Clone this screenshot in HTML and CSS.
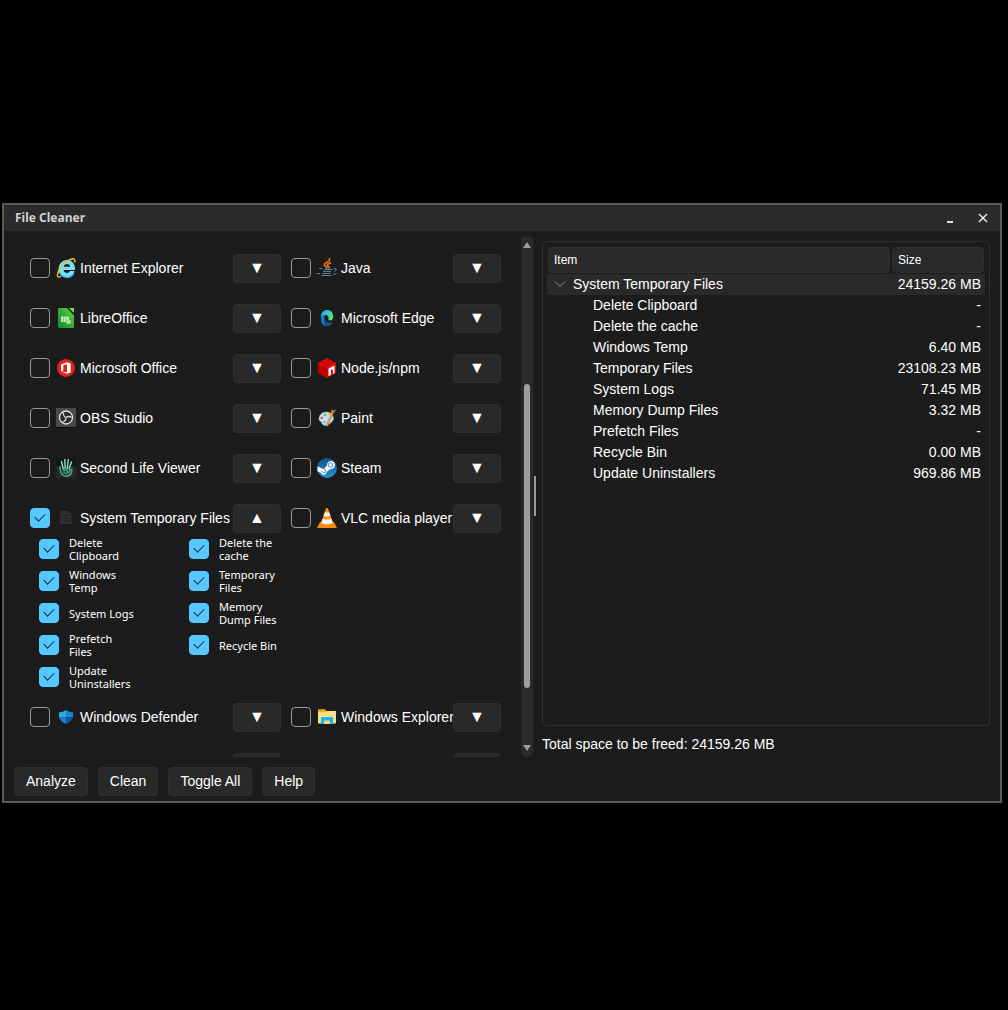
FILE: index.html
```html
<!DOCTYPE html>
<html lang="en">
<head>
<meta charset="utf-8">
<title>File Cleaner</title>
<link rel="stylesheet" href="styles.css">
</head>
<body>
<main class="window">
  <header class="titlebar">
    <h1 class="title">File Cleaner</h1>
    <button class="win-btn" type="button" aria-label="Minimize">
      <svg width="12" height="12" viewBox="0 0 12 12"><path d="M3 10h6" stroke="#e4e4e4" stroke-width="2"/></svg>
    </button>
    <button class="win-btn" type="button" aria-label="Close">
      <svg width="12" height="12" viewBox="0 0 12 12"><path d="M2 2l8 8M10 2l-8 8" stroke="#f0f0f0" stroke-width="1.4" fill="none"/></svg>
    </button>
  </header>

  <div class="content">
    <section class="list-pane">
      <div class="programs">
        <div class="program"><div class="head">
          <input class="check" type="checkbox" id="ie">
          <label class="name" for="ie">
            <svg class="icon" viewBox="0 0 20 20"><path d="M18.500 13H14C13.400 14.300 12.400 14.900 11 14.900C8.900 14.900 7.700 13.500 7.600 11.900H19C19.500 6.300 16 2 11 2C6.300 2 2.600 6 2.600 11C2.600 16 6.300 19.600 11 19.600C14.700 19.600 17.600 17 18.500 13M7.700 8.800C8 7 9.300 6.100 11 6.100C12.800 6.100 14 7.200 14.200 8.800Z" fill="#78dffb" fill-rule="evenodd"/><path d="M4 15c1.500 3 4 4.300 7 4.300c3 0 5.500-1.500 6.800-4.200" fill="none" stroke="#3bb4ea" stroke-width="1.300"/><path d="M18.800 4.500C19 2 18.500.5 16.500.8C11 2 3.300 9 1.700 15.500C1 18.700 2 19.800 5 18.300" fill="none" stroke="#f2bd2c" stroke-width="1.400"/></svg>
            Internet Explorer</label>
          <button class="toggle" type="button" aria-label="Expand Internet Explorer">▼</button>
        </div></div>
        <div class="program"><div class="head">
          <input class="check" type="checkbox" id="java">
          <label class="name" for="java">
            <svg class="icon" viewBox="0 0 20 20"><path d="M12.500 0v2.500l-5 3.500v1.500l3 3M14 4.500l-3.500 2v1.500l1.500 1v1.500" fill="none" stroke="#ee7b16" stroke-width="1.500"/><path d="M2 10.500h3M7 11.500h9M6 13.500h8M5.500 15.500h8M0 15.500h3M4.500 17.500h10M17 10.500h2v2l-2 1M16 16.500l3.500-1" fill="none" stroke="#5285a5" stroke-width="1"/></svg>
            Java</label>
          <button class="toggle" type="button" aria-label="Expand Java">▼</button>
        </div></div>

        <div class="program"><div class="head">
          <input class="check" type="checkbox" id="libre">
          <label class="name" for="libre">
            <svg class="icon" viewBox="0 0 20 20"><defs><linearGradient id="gl" x1="1" y1="0" x2="0" y2="1"><stop offset="0" stop-color="#5fd33c"/><stop offset="1" stop-color="#15853c"/></linearGradient></defs><path d="M3 0h8l7 7.500V18.500q0 1.500-1.500 1.500H3.500Q2 20 2 18.500V1.500Q2 0 3 0z" fill="url(#gl)"/><path d="M13 0h5v5z" fill="#72e24a"/><path d="M5 8.500h8v5.500H5z" fill="#bdebb0"/><path d="M7.500 8.500v5.500M10 8.500v5.500" stroke="#63bd68" stroke-width=".7"/><path d="M10 12h5v4h-5z" fill="#83d56e"/><circle cx="12.500" cy="13.500" r="1.800" fill="#aeea80"/></svg>
            LibreOffice</label>
          <button class="toggle" type="button" aria-label="Expand LibreOffice">▼</button>
        </div></div>
        <div class="program"><div class="head">
          <input class="check" type="checkbox" id="edge">
          <label class="name" for="edge">
            <svg class="icon" viewBox="0 0 20 20"><defs><linearGradient id="ge" x1="0" y1="0" x2="1" y2=".5"><stop offset="0" stop-color="#2aaee8"/><stop offset=".55" stop-color="#31c6d5"/><stop offset="1" stop-color="#62dc65"/></linearGradient></defs><path d="M4 9C4 4.500 6.500 2 10.300 2C14 2 16.200 4.800 16.200 8.500C16.200 11 15 12.500 13 12.500C11.500 12.500 11 11.800 11.500 10.500C11.900 8.500 10.500 7 8.700 7C6.500 7 4.800 8 4 10z" fill="url(#ge)"/><path d="M4 10C4.500 7.700 6.500 6.300 8.500 6.700C7 8.500 6.500 10.500 7.500 13C8.500 15.500 11.500 16 15.200 14.500C14 17 12 18 10 18C6 18 3.800 14.500 4 10z" fill="#147bd0"/><path d="M8.300 9.500C7.200 12.500 9.500 15.800 15.200 14.500C14 17 12 18 10 18C7 17.500 5.500 12 8.300 9.500z" fill="#155399"/></svg>
            Microsoft Edge</label>
          <button class="toggle" type="button" aria-label="Expand Microsoft Edge">▼</button>
        </div></div>

        <div class="program"><div class="head">
          <input class="check" type="checkbox" id="office">
          <label class="name" for="office">
            <svg class="icon" viewBox="0 0 20 20"><circle cx="10" cy="10" r="9" fill="#e2231a"/><path d="M5 6.500L11 4.300L14.700 5.400V14.600L11 15.800L5 13.600L11 14.200V6.300L7.300 7.200V12.500L5 13.600z" fill="#fff"/></svg>
            Microsoft Office</label>
          <button class="toggle" type="button" aria-label="Expand Microsoft Office">▼</button>
        </div></div>
        <div class="program"><div class="head">
          <input class="check" type="checkbox" id="npm">
          <label class="name" for="npm">
            <svg class="icon" viewBox="0 0 20 20"><path d="M10 0l9 5v10l-9 5l-9-5V5z" fill="#d20808"/><path d="M1 5l9 5v10l-9-5z" fill="#c00000"/><path d="M1 5l9 5l9-5" fill="none" stroke="#ea2727" stroke-width=".5"/><path d="M11.500 10.500l6-3v7.500l-1.700 1v-5l-2 1v5l-2.300 1z" fill="#fff"/></svg>
            Node.js/npm</label>
          <button class="toggle" type="button" aria-label="Expand Node.js/npm">▼</button>
        </div></div>

        <div class="program"><div class="head">
          <input class="check" type="checkbox" id="obs">
          <label class="name" for="obs">
            <svg class="icon" viewBox="0 0 20 20"><path d="M0 0h20v20H0z" fill="#0c0c0c"/><path d="M0 0h20v19H0z" fill="#494949"/><circle cx="10" cy="9.500" r="6.500" fill="#2c2a2c" stroke="#e4e4e4" stroke-width="1.300"/><path d="M7.500 4.500c-.5 2.500.5 4 2.500 5c2-1.500 3.500-1.500 5.500 0M10 9.500c0 2.500-1 4-3.500 4.500" fill="none" stroke="#d8d8d8" stroke-width="1.300"/></svg>
            OBS Studio</label>
          <button class="toggle" type="button" aria-label="Expand OBS Studio">▼</button>
        </div></div>
        <div class="program"><div class="head">
          <input class="check" type="checkbox" id="paint">
          <label class="name" for="paint">
            <svg class="icon" viewBox="0 0 20 20"><path d="M10 4C5.500 3.500 1.500 7 2 11.500c.3 2 2 1.500 2.500 3C5 17 8 18.500 11.500 16.500C15 14.500 17.500 11.500 16 8C15 5.500 13 4.300 10 4z" fill="#c6e2f1" stroke="#7fa9bd" stroke-width=".6"/><circle cx="8" cy="7" r="1.200" fill="#5db45a"/><circle cx="4.800" cy="10" r="1.200" fill="#dd5247"/><circle cx="12" cy="6.300" r="1.200" fill="#eac634"/><circle cx="7.500" cy="14" r="1.200" fill="#6aaedb"/><path d="M9.500 18L16 4" stroke="#a5652c" stroke-width="2.200"/><path d="M9.500 18L15.500 4" stroke="#eeb36b" stroke-width="1.300"/><path d="M14.500 4.500L14 1.500L16.500 2.500L18.500 1L18 4L16 5.500z" fill="#bb7842"/></svg>
            Paint</label>
          <button class="toggle" type="button" aria-label="Expand Paint">▼</button>
        </div></div>

        <div class="program"><div class="head">
          <input class="check" type="checkbox" id="sl">
          <label class="name" for="sl">
            <svg class="icon" viewBox="0 0 20 20"><path d="M0 0h20v20H0z" fill="#151515"/><path d="M0 8h20v12H0z" fill="#282828"/><path d="M7.300 11L5.500 3.500M9.200 10L8.800 1.500M11.300 10L12.300 1.500M13 11L15.500 4" stroke="#8ce0c5" stroke-width="1.400" stroke-linecap="round"/><path d="M4 8.500c-.3 4 1 9.500 6 9.500s6-3.500 5.800-7.500" fill="none" stroke="#43a78b" stroke-width="1.600"/><path d="M6.300 12c2-2.300 6-2.300 8 0c-1 3.500-7 4.500-6.500 1.500c.8-2 4-1.700 3.500.3" fill="none" stroke="#43a78b" stroke-width="1.300"/></svg>
            Second Life Viewer</label>
          <button class="toggle" type="button" aria-label="Expand Second Life Viewer">▼</button>
        </div></div>
        <div class="program"><div class="head">
          <input class="check" type="checkbox" id="steam">
          <label class="name" for="steam">
            <svg class="icon" viewBox="0 0 20 20"><defs><linearGradient id="gs" x1="0" y1="0" x2="0" y2="1"><stop offset="0" stop-color="#12558c"/><stop offset="1" stop-color="#2390d8"/></linearGradient></defs><circle cx="10" cy="10" r="10" fill="url(#gs)"/><path d="M.5 8.500L7 11.200L10 7.200A4 4 0 1 1 13.500 11L9.500 14A2.800 2.800 0 0 1 4 14.800L.5 13.200z" fill="#fff"/><circle cx="13.500" cy="7" r="2.300" fill="#eef6fc" stroke="#2b6fa5" stroke-width=".8"/><path d="M4.500 13.500l2 .9a1.500 1.500 0 1 0 .6-2.800" fill="none" stroke="#2271a9" stroke-width=".8"/></svg>
            Steam</label>
          <button class="toggle" type="button" aria-label="Expand Steam">▼</button>
        </div></div>

        <div class="program">
          <div class="head">
            <input class="check" type="checkbox" id="temp" checked>
            <label class="name" for="temp">
              <svg class="icon" viewBox="0 0 20 20"><path d="M4 3h8l3.500 3v10H4z" fill="#303030"/><path d="M4 7h12M4 10h12M5 13h11" stroke="#232323" stroke-width="1"/></svg>
              System Temporary Files</label>
            <button class="toggle" type="button" aria-label="Collapse System Temporary Files">▲</button>
          </div>
          <div class="options">
            <div class="option"><input class="check" type="checkbox" id="o1" checked><label for="o1">Delete Clipboard</label></div>
            <div class="option"><input class="check" type="checkbox" id="o2" checked><label for="o2">Delete the cache</label></div>
            <div class="option"><input class="check" type="checkbox" id="o3" checked><label for="o3">Windows Temp</label></div>
            <div class="option"><input class="check" type="checkbox" id="o4" checked><label for="o4">Temporary Files</label></div>
            <div class="option"><input class="check" type="checkbox" id="o5" checked><label for="o5">System Logs</label></div>
            <div class="option"><input class="check" type="checkbox" id="o6" checked><label for="o6">Memory Dump Files</label></div>
            <div class="option"><input class="check" type="checkbox" id="o7" checked><label for="o7">Prefetch Files</label></div>
            <div class="option"><input class="check" type="checkbox" id="o8" checked><label for="o8">Recycle Bin</label></div>
            <div class="option"><input class="check" type="checkbox" id="o9" checked><label for="o9">Update Uninstallers</label></div>
          </div>
        </div>
        <div class="program"><div class="head">
          <input class="check" type="checkbox" id="vlc">
          <label class="name" for="vlc">
            <svg class="icon" viewBox="0 0 20 20"><path d="M3 14h14l3 6H0z" fill="#f68b12"/><path d="M9 .5q1-1 2 0L16 15q-6 3.500-12 0z" fill="#fa9a22"/><path d="M7.700 4.500h4.600l1.100 3.200q-3.400 1.500-6.800 0z" fill="#f4f4f4"/><path d="M5.500 10.700q4.500 1.800 9 0l1.300 4q-5.800 3-11.600 0z" fill="#f4f4f4"/></svg>
            VLC media player</label>
          <button class="toggle" type="button" aria-label="Expand VLC media player">▼</button>
        </div></div>

        <div class="program"><div class="head">
          <input class="check" type="checkbox" id="defender">
          <label class="name" for="defender">
            <svg class="icon" viewBox="0 0 20 20"><path d="M10 3q-3 2.300-7 2.500v4.700H10z" fill="#2ca8e4"/><path d="M10 3q3 2.300 7 2.500v4.700H10z" fill="#1586d5"/><path d="M3 10.200h7V17q-6-2.500-7-6.800z" fill="#167fd2"/><path d="M17 10.200h-7V17q6-2.500 7-6.800z" fill="#0b57a4"/></svg>
            Windows Defender</label>
          <button class="toggle" type="button" aria-label="Expand Windows Defender">▼</button>
        </div></div>
        <div class="program"><div class="head">
          <input class="check" type="checkbox" id="explorer">
          <label class="name" for="explorer">
            <svg class="icon" viewBox="0 0 20 20"><path d="M1 3q0-.7.700-.7H8l1.500 1.700H18.500q.5 0 .5.600V10H1z" fill="#e8b417"/><path d="M1 5.200H8.500L10 4H19V16.500H1z" fill="#fbdf84"/><path d="M4 10.500q0-.5.500-.5h11q.5 0 .5.500V17H13v-3H7v3H4z" fill="#18b6ee"/><path d="M7 13.500h6V17H7z" fill="#f4d77b"/></svg>
            Windows Explorer</label>
          <button class="toggle" type="button" aria-label="Expand Windows Explorer">▼</button>
        </div></div>

        <div class="program"><div class="head">
          <input class="check" type="checkbox" aria-label="Program">
          <button class="toggle" type="button" aria-label="Expand"></button>
        </div></div>
        <div class="program"><div class="head">
          <input class="check" type="checkbox" aria-label="Program">
          <button class="toggle" type="button" aria-label="Expand"></button>
        </div></div>
      </div>
      <div class="scrollbar">
        <svg width="8" height="6" viewBox="0 0 8 6"><path d="M4 0l4 6H0z" fill="#9e9e9e"/></svg>
        <div class="track"><div class="thumb"></div></div>
        <svg width="8" height="6" viewBox="0 0 8 6"><path d="M0 0h8L4 6z" fill="#9e9e9e"/></svg>
      </div>
    </section>

    <div class="splitter"></div>

    <section class="results-pane">
      <div class="results">
        <table class="tree">
          <thead>
            <tr><th><span class="th">Item</span></th><th class="size"><span class="th">Size</span></th></tr>
          </thead>
          <tbody>
            <tr class="parent"><td><svg class="chevron" viewBox="0 0 12 8"><path d="M1 1.500l5 5l5-5" fill="none" stroke="#858585"/></svg>System Temporary Files</td><td>24159.26 MB</td></tr>
            <tr><td>Delete Clipboard</td><td>-</td></tr>
            <tr><td>Delete the cache</td><td>-</td></tr>
            <tr><td>Windows Temp</td><td>6.40 MB</td></tr>
            <tr><td>Temporary Files</td><td>23108.23 MB</td></tr>
            <tr><td>System Logs</td><td>71.45 MB</td></tr>
            <tr><td>Memory Dump Files</td><td>3.32 MB</td></tr>
            <tr><td>Prefetch Files</td><td>-</td></tr>
            <tr><td>Recycle Bin</td><td>0.00 MB</td></tr>
            <tr><td>Update Uninstallers</td><td>969.86 MB</td></tr>
          </tbody>
        </table>
      </div>
      <p class="total">Total space to be freed: 24159.26 MB</p>
    </section>
  </div>

  <footer class="actions">
    <button class="btn" type="button">Analyze</button>
    <button class="btn" type="button">Clean</button>
    <button class="btn" type="button">Toggle All</button>
    <button class="btn" type="button">Help</button>
  </footer>
</main>
</body>
</html>
```
FILE: styles.css
```css
* {
  box-sizing: border-box;
}

body {
  margin: 0;
  min-height: 100vh;
  padding: 0 6px 4px 2px;
  display: flex;
  align-items: center;
  background: #000;
  color: #fff;
  font: 14px/18px "Liberation Sans", Arial, sans-serif;
}

button {
  font: inherit;
  color: inherit;
}

.window {
  flex: 1;
  min-width: 0;
  border: 2px solid #5a5a5a;
  background: #1c1c1c;
}

/* Title bar */
.titlebar {
  display: flex;
  align-items: center;
  height: 26px;
  padding: 0 6px 0 11px;
  background: #2b2b2b;
}

.title {
  flex: 1;
  margin: 0;
  font: bold 12px/18px "Noto Sans", "Open Sans", sans-serif;
  color: #d0d0d0;
}

.win-btn {
  display: flex;
  align-items: center;
  justify-content: center;
  width: 22px;
  height: 22px;
  margin-left: 11px;
  padding: 0;
  border: 0;
  background: none;
}

/* Two panes */
.content {
  display: flex;
  padding: 5px 10px 0;
}

.list-pane {
  display: flex;
  flex: none;
  gap: 20px;
  height: 521px;
  padding-left: 16px;
}

.programs {
  display: grid;
  grid-template-columns: 251px 210px;
  grid-auto-rows: max-content;
  gap: 10px;
  padding-top: 12px;
  overflow: hidden;
}

.head {
  display: flex;
  align-items: center;
  height: 40px;
}

.name {
  display: flex;
  align-items: center;
  gap: 4px;
  min-width: 0;
  margin-left: 6px;
  white-space: nowrap;
}

.icon {
  flex: none;
  width: 20px;
  height: 20px;
}

.toggle {
  flex: none;
  width: 48px;
  height: 29px;
  margin-left: auto;
  padding: 0;
  border: 1px solid #2f2f2f;
  border-radius: 4px;
  background: #292929;
  font-size: 16px;
}

.check {
  appearance: none;
  display: flex;
  flex: none;
  align-items: center;
  justify-content: center;
  width: 20px;
  height: 20px;
  margin: 0;
  border: 1px solid #9a9a9a;
  border-radius: 4px;
}

.check:checked {
  border-color: #57c8ff;
  background: #57c8ff;
}

.check:checked::before {
  content: "";
  width: 5px;
  height: 9px;
  margin-bottom: 4px;
  border: solid #17313f;
  border-width: 0 1px 1px 0;
  transform: rotate(45deg);
}

.options {
  display: grid;
  grid-template-columns: 150px 92px;
  grid-auto-rows: 20px;
  gap: 12px 0;
  padding: 1px 0 0 9px;
  font: 11px/13px "Noto Sans", "Open Sans", sans-serif;
}

.option {
  display: flex;
  align-items: center;
  gap: 10px;
}

.option label {
  width: 66px;
}

/* Scroll bar */
.scrollbar {
  display: flex;
  flex-direction: column;
  align-items: center;
  width: 12px;
  padding: 6px 0;
  border-radius: 6px;
  background: #2a2a2a;
}

.track {
  flex: 1;
  padding: 136px 0 57px;
}

.thumb {
  width: 6px;
  height: 100%;
  border-radius: 3px;
  background: #9e9e9e;
}

.splitter {
  align-self: center;
  width: 2px;
  height: 40px;
  margin: 0 6px 2px 1px;
  background: #9e9e9e;
}

/* Results */
.results-pane {
  display: flex;
  flex: 1;
  flex-direction: column;
  min-width: 0;
  padding-top: 5px;
}

.results {
  flex: 1;
  padding: 5px 4px;
  border: 1px solid #2f2f2f;
  border-radius: 4px;
}

.tree {
  width: 100%;
  border-collapse: collapse;
}

.tree th {
  padding: 0 1px 1px;
  font-size: 12px;
  font-weight: normal;
  text-align: left;
}

.tree .size {
  width: 94px;
}

.th {
  display: block;
  padding: 3px 5px;
  border: 1px solid #2f2f2f;
  border-radius: 4px;
  background: #2a2a2a;
}

.tree td {
  height: 21px;
  padding: 0 4px 2px 46px;
  white-space: nowrap;
}

.tree td + td {
  padding-left: 0;
  text-align: right;
}

.parent {
  background: #2a2a2a;
}

.tree .parent td:first-child {
  padding-left: 7px;
}

.chevron {
  width: 12px;
  height: 8px;
  margin-right: 7px;
  vertical-align: 1px;
}

.total {
  margin: 0;
  padding: 9px 0 4px;
}

/* Footer buttons */
.actions {
  display: flex;
  gap: 10px;
  padding: 10px 10px 5px;
}

.btn {
  height: 29px;
  padding: 0 11px 1px;
  border: 1px solid #2f2f2f;
  border-radius: 4px;
  background: #292929;
}
```
